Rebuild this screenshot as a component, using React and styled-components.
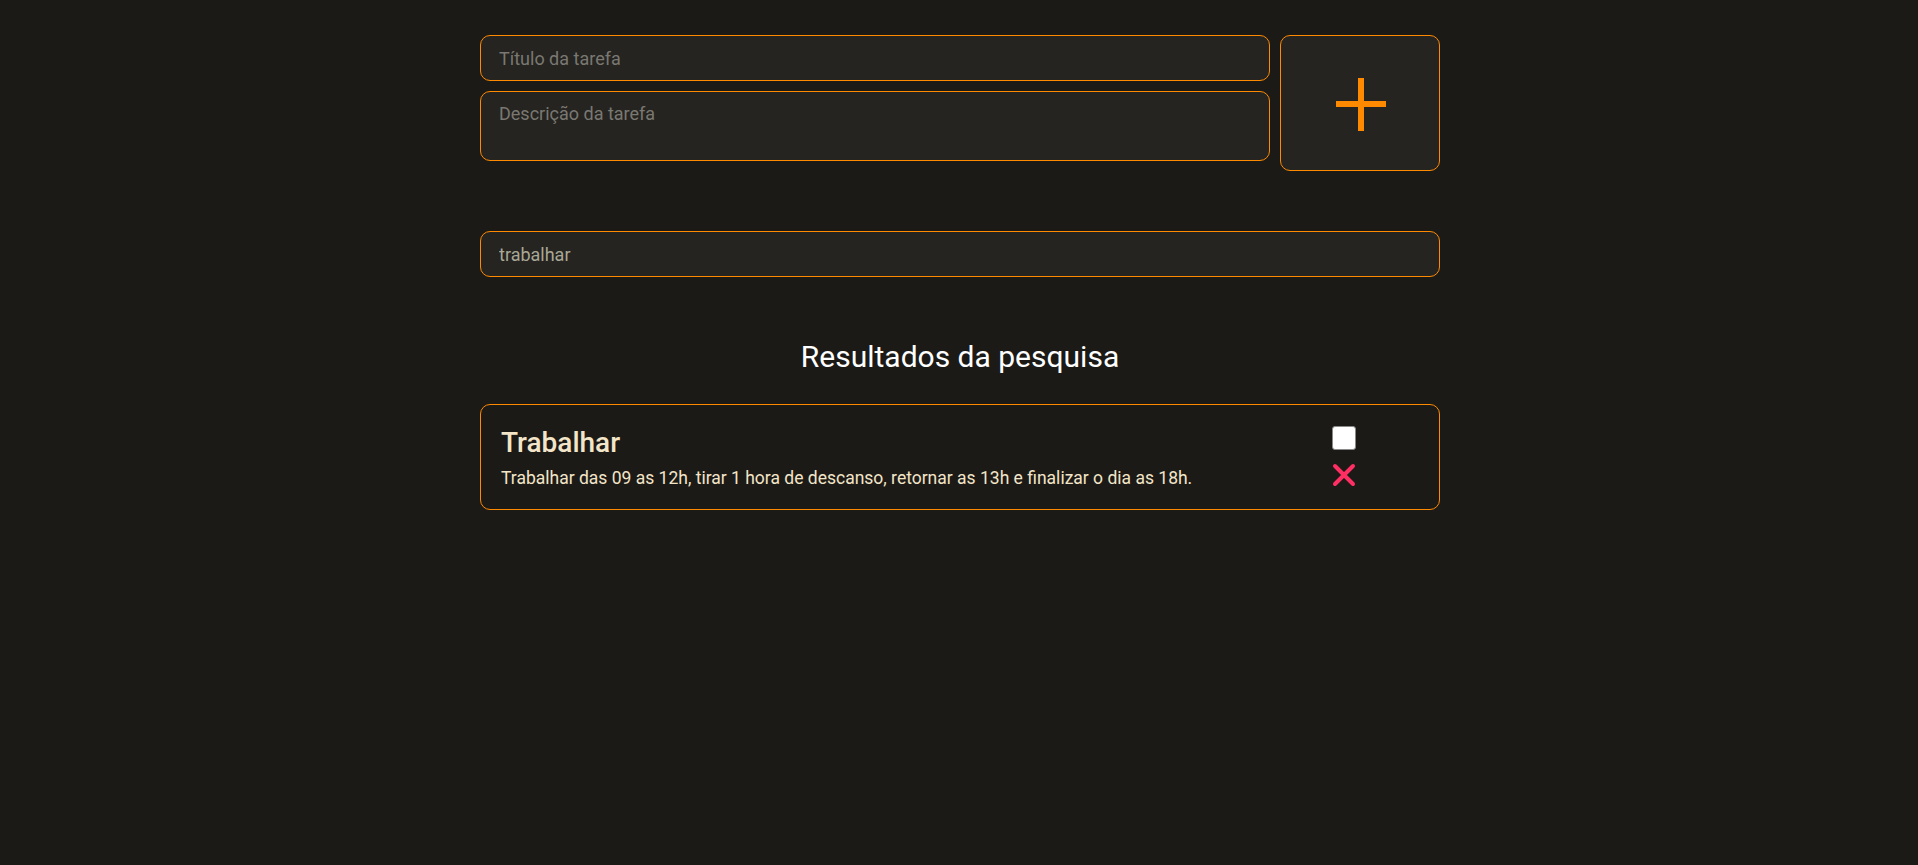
import styled, { createGlobalStyle } from "styled-components"

const GlobalStyle = createGlobalStyle`
    html, body {
        margin: 0;
        padding: 0;
        background-color: #1c1a17;
        font-family: Roboto, "Liberation Sans", sans-serif;
    }
    * {
        box-sizing: border-box;
    }
`

const tasks = [
    {
        title: "Trabalhar",
        description: "Trabalhar das 09 as 12h, tirar 1 hora de descanso, retornar as 13h e finalizar o dia as 18h."
    }
]

export default function App() {
    return (
        <>
            <GlobalStyle />
            <Container>
                <FormRow>
                    <Fields>
                        <TextInput placeholder="Título da tarefa" />
                        <TextArea placeholder="Descrição da tarefa" />
                    </Fields>
                    <AddButton aria-label="Adicionar">
                        <svg width="50" height="53" viewBox="0 0 50 53">
                            <rect x="22" y="0" width="6" height="53" fill="#ff8a00" />
                            <rect x="0" y="23" width="50" height="6" fill="#ff8a00" />
                        </svg>
                    </AddButton>
                </FormRow>

                <SearchInput defaultValue="trabalhar" />

                <Heading>Resultados da pesquisa</Heading>

                {tasks.map((t, i) =>
                    <TaskCard key={i}>
                        <TaskText>
                            <TaskTitle>{t.title}</TaskTitle>
                            <TaskDescription>{t.description}</TaskDescription>
                        </TaskText>
                        <TaskActions>
                            <CheckBox />
                            <DeleteIcon width="24" height="24" viewBox="0 0 24 24">
                                <path d="M3 3 L21 21 M21 3 L3 21" stroke="#ff2e63" strokeWidth="4" strokeLinecap="round" />
                            </DeleteIcon>
                        </TaskActions>
                    </TaskCard>
                )}
            </Container>
        </>
    )
}

const Container = styled.div`
    width: 960px;
    margin: 35px 0 0 calc(50% - 479px);
    display: flex;
    flex-direction: column;
`
const FormRow = styled.div`
    display: grid;
    grid-template-columns: 1fr 160px;
    gap: 10px;
`
const Fields = styled.div`
    display: flex;
    flex-direction: column;
    gap: 10px;
`
const fieldStyle = `
    background-color: #252420;
    border: 1px solid #ff8a00;
    border-radius: 10px;
    font-family: Roboto, "Liberation Sans", sans-serif;
    font-size: 18px;
    color: #a9a796;
    outline: none;
    padding: 0 18px;
    &::placeholder {
        color: #7a7872;
    }
`
const TextInput = styled.input`
    ${fieldStyle}
    height: 46px;
`
const TextArea = styled.textarea`
    ${fieldStyle}
    height: 70px;
    padding-top: 11px;
    resize: none;
`
const AddButton = styled.button`
    height: 136px;
    background-color: #252420;
    border: 1px solid #ff8a00;
    border-radius: 10px;
    display: flex;
    align-items: center;
    justify-content: center;
    cursor: pointer;
    padding: 0;
    svg {
        margin-left: 1px;
        margin-top: 2px;
    }
`
const SearchInput = styled.input`
    ${fieldStyle}
    height: 46px;
    margin-top: 60px;
`
const Heading = styled.h2`
    margin: 62px 0 30px;
    text-align: center;
    color: #ffffff;
    font-size: 30px;
    font-weight: 400;
    line-height: 35px;
`
const TaskCard = styled.div`
    height: 106px;
    border: 1px solid #ff8a00;
    border-radius: 10px;
    display: flex;
    justify-content: space-between;
    padding: 0 83px 0 20px;
`
const TaskText = styled.div`
    display: flex;
    flex-direction: column;
    padding-top: 22px;
`
const TaskTitle = styled.div`
    color: #f3e5c8;
    font-size: 28px;
    font-weight: 500;
    line-height: 32px;
`
const TaskDescription = styled.div`
    color: #f3e5c8;
    font-size: 17.5px;
    line-height: 21px;
    margin-top: 9px;
`
const TaskActions = styled.div`
    display: flex;
    flex-direction: column;
    align-items: center;
    gap: 13px;
    padding-top: 21px;
`
const CheckBox = styled.div`
    width: 24px;
    height: 24px;
    background-color: #ffffff;
    border: 1px solid #8a8a8a;
    border-radius: 3px;
`
const DeleteIcon = styled.svg`
    width: 24px;
    height: 24px;
    display: block;
`
